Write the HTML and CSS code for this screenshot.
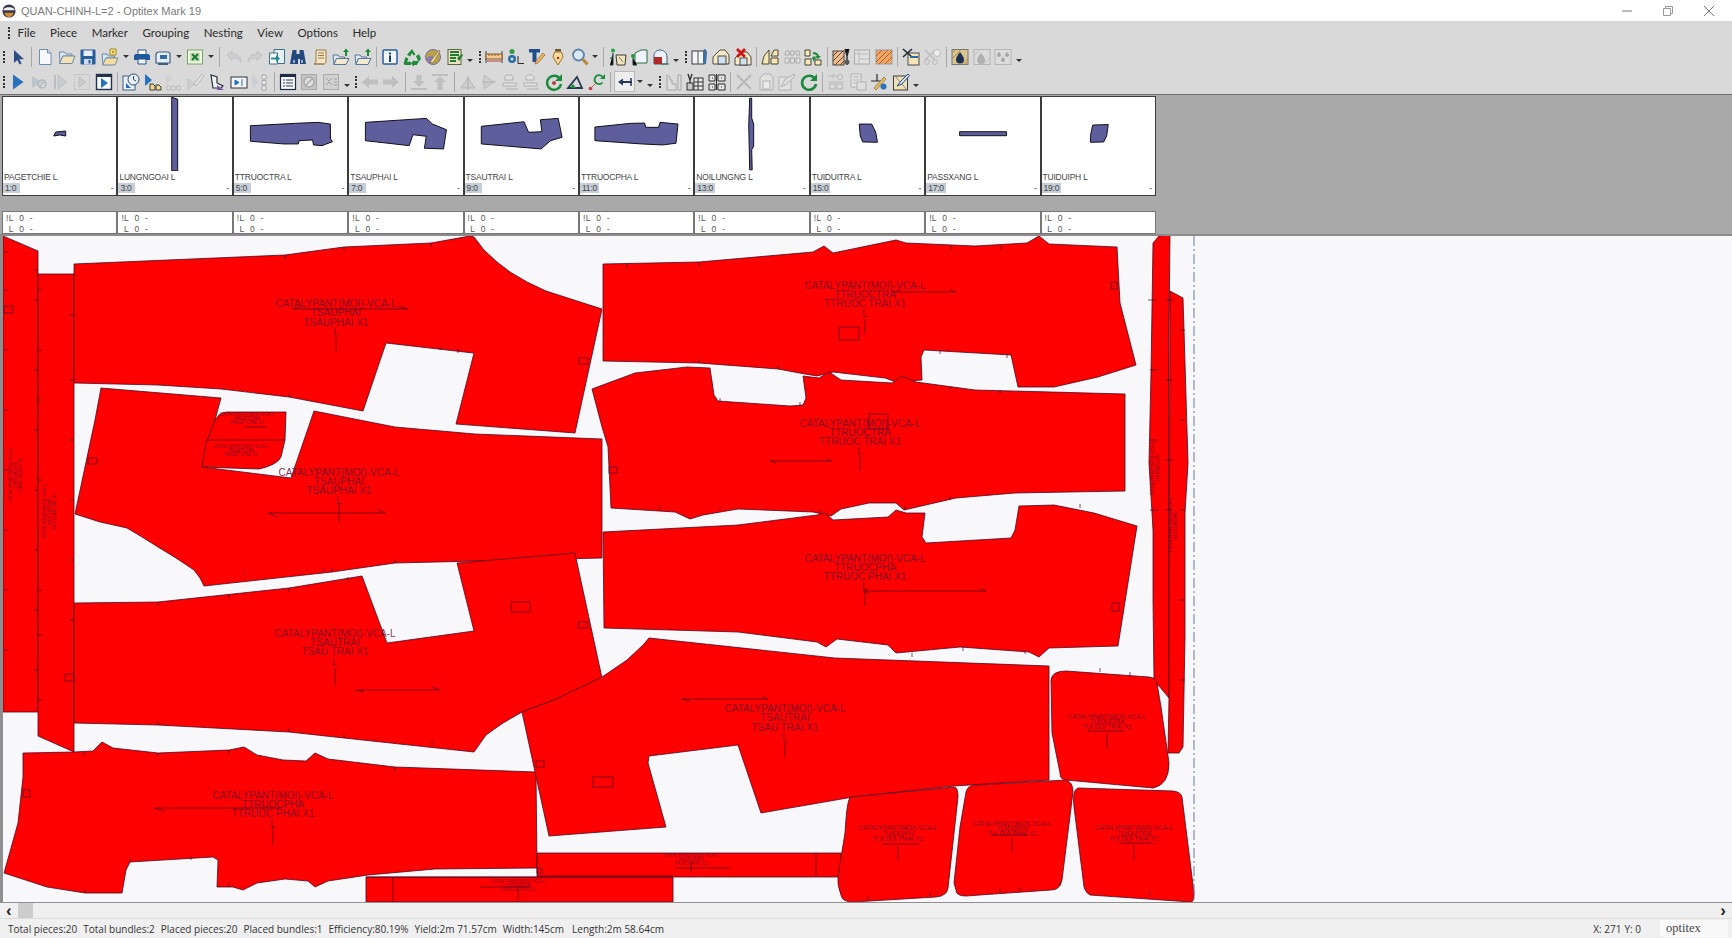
FILE: index.html
```html
<!DOCTYPE html>
<html lang="en">
<head>
<meta charset="utf-8">
<title>QUAN-CHINH-L=2 - Optitex Mark 19</title>
<link rel="stylesheet" href="styles.css">
</head>
<body>
<svg class="defs" aria-hidden="true">
  <symbol id="arrow" viewBox="0 0 18 18"><path d="M5 2v13l3.2-3 2.400 4.600 2-1-2.300-4.400H15z" fill="#2c4f86"/></symbol>
  <symbol id="doc" viewBox="0 0 18 18"><path d="M3.500 1.500h8l3.500 3.500v11.500H3.500z" fill="#f7f9fd" stroke="#6f8db3"/><path d="M11.500 1.500V5H15" fill="#cfdcec" stroke="#6f8db3"/></symbol>
  <symbol id="folder" viewBox="0 0 18 18"><path d="M1.500 4h5l1.500 2h6v2H5L2 15.500z" fill="#dfe9f3" stroke="#6a8aa8"/><path d="M1.500 15.500L5 8h12l-3 7.500z" fill="#f4e4b6" stroke="#6a8aa8"/></symbol>
  <symbol id="save" viewBox="0 0 18 18"><rect x="1.500" y="1.500" width="15" height="15" rx="1" fill="#2a5d9c"/><rect x="4.500" y="2.500" width="9" height="5.500" fill="#e8eef6"/><rect x="5" y="11" width="8" height="5.500" fill="#cfdcec"/><rect x="9.500" y="12" width="2" height="3.500" fill="#2a5d9c"/></symbol>
  <symbol id="ostar" viewBox="0 0 18 18"><path d="M1 6h5l1.500 2h6v2H5L2 17z" fill="#d7e3ee" stroke="#6a8aa8"/><path d="M1.500 17L5 10h12l-3 7z" fill="#f3dc9c" stroke="#6a8aa8"/><path d="M9 1h6v6H9z" fill="#f7e27a" stroke="#a98a2c"/><path d="M11 3h2v2h-2z" fill="#b8902a"/></symbol>
  <symbol id="print" viewBox="0 0 18 18"><path d="M5 2h8v5H5z" fill="#fff" stroke="#2a5288"/><path d="M1 8c0-1 1-2 2-2h12c1 0 2 1 2 2v4H1z" fill="#1f5a9e"/><path d="M5 11h8v5H5z" fill="#eef3f9" stroke="#2a5288"/></symbol>
  <symbol id="scan" viewBox="0 0 18 18"><path d="M2 7c0-2 1-3 3-3h9c1 0 2 1 2 3v8H2z" fill="#e6edf4" stroke="#3d5f82" stroke-width="1.200"/><rect x="6" y="7" width="7" height="4" fill="#2a6ba8"/><path d="M4 15h10v2H4z" fill="#3d5f82"/></symbol>
  <symbol id="xl" viewBox="0 0 18 18"><rect x="1.500" y="2" width="15" height="14" fill="#eef6e8" stroke="#77a25f"/><rect x="4" y="4.500" width="10" height="9" fill="#c5e0b2"/><path d="M6 6l6 6M12 6l-6 6" stroke="#1e7a34" stroke-width="2.200"/></symbol>
  <symbol id="undo" viewBox="0 0 18 18"><path d="M2 7l5-4v3c5 0 9 2 9 8-2-3-5-4-9-4v2.500z" fill="#ccced2" stroke="#b5b7bb" stroke-width=".6"/></symbol>
  <symbol id="redo" viewBox="0 0 18 18"><path d="M16 7l-5-4v3C6 6 2 8 2 14c2-3 5-4 9-4v2.500z" fill="#ccced2" stroke="#b5b7bb" stroke-width=".6"/></symbol>
  <symbol id="export" viewBox="0 0 18 18"><path d="M6 1.500h10.500v14H6z" fill="#e7f0f3" stroke="#3d6f8a"/><path d="M1.500 5h8v11h-8z" fill="#fff" stroke="#3d6f8a"/><path d="M3 9.500h5V7l4 3.500-4 3.500v-2.500H3z" fill="#1f8c8c"/></symbol>
  <symbol id="binoc" viewBox="0 0 18 18"><path d="M3.500 2h4v4h3V2h4l2.500 14h-6v-5h-2v5H1z" fill="#23497c"/><path d="M4 12h2v3H4zM12 12h2v3h-2z" fill="#8fb1d6"/></symbol>
  <symbol id="doclist" viewBox="0 0 18 18"><path d="M5 2h10v11c0 2-1 3-2 3H3c1 0 2-1 2-3z" fill="#f3e5c7" stroke="#9a7a48"/><path d="M7 5h6M7 7.500h6M7 10h6M3 16h10" stroke="#9a7a48"/></symbol>
  <symbol id="farrow" viewBox="0 0 18 18"><path d="M1 7h5l1.500 2h5v1.500H4.500L2 16.500z" fill="#dfe9f3" stroke="#55789a"/><path d="M2 16.500L4.500 10.500H17l-3 6z" fill="#f4e9cc" stroke="#55789a"/><path d="M13 8V4h-2l3-3.500L17 4h-2v4z" fill="#1c8c3a"/></symbol>
  <symbol id="info" viewBox="0 0 18 18"><rect x="2" y="2" width="14" height="14" rx="1" fill="#f2f6fb" stroke="#2a5d9c" stroke-width="1.500"/><path d="M8 7.500h2V14H8zM8 4.500h2v2H8z" fill="#1d3f6e"/></symbol>
  <symbol id="recyc" viewBox="0 0 18 18"><path d="M9 1l3.500 5.500-2 1L9 5 7 8.500 4 6.700zM2.500 9l3 1.700-1.500 3H8V17H3c-2 0-2.800-1.500-2-3zM11 13h5l-1.500 3c-.5 1-1 1-2 1H11v2l-3-3.700 3-3.300z" fill="#1e8c3a"/><path d="M13 8l3-1.700 1.500 3c.5 1 .3 2-.5 3.200l-2 .5z" fill="#1e8c3a"/></symbol>
  <symbol id="comp" viewBox="0 0 18 18"><circle cx="9" cy="9" r="7.500" fill="#b9a24a" stroke="#7a6a9a"/><circle cx="6.500" cy="11.500" r="3.500" fill="#8a7ab5"/><path d="M6 14L15 2l1 1-7 12z" fill="#e8dca0" stroke="#6c5c2a" stroke-width=".6"/></symbol>
  <symbol id="notes" viewBox="0 0 18 18"><rect x="2" y="1.500" width="13" height="15" fill="#e8e2c2" stroke="#5a6a3a"/><path d="M4 4h9M4 7h9M4 10h6M4 13h6" stroke="#247a32" stroke-width="2"/><path d="M11 10l5-4 1 1-4 6z" fill="#247a32"/></symbol>
  <symbol id="ruler" viewBox="0 0 18 18"><path d="M1 3v12M17 3v12" stroke="#3d3d3d"/><rect x="1" y="6" width="16" height="5" fill="#f0c890" stroke="#8a5a28"/><path d="M4 6v2M7 6v2M10 6v2M13 6v2" stroke="#8a5a28"/><path d="M2 13h14" stroke="#c23a3a"/></symbol>
  <symbol id="pieces" viewBox="0 0 18 18"><circle cx="6" cy="3.500" r="2.500" fill="#2f9a3f"/><circle cx="6" cy="11" r="4" fill="#2a6ba8"/><circle cx="6" cy="11" r="1.500" fill="#d4e2f0"/><path d="M12 15.500h6M12 15.500V8" stroke="#2b2b2b"/></symbol>
  <symbol id="tpen" viewBox="0 0 18 18"><path d="M1 1h11v3.500H8.500V14H4.500V4.500H1z" fill="#1f4e8c"/><path d="M8 13l7-8 2 2-7 8-3 1z" fill="#e6b95a" stroke="#a5462a" stroke-width=".6"/></symbol>
  <symbol id="nib" viewBox="0 0 18 18"><path d="M6 1h6v2.500H6z" fill="#6d5a2a"/><path d="M5.500 4h7L14 9l-5 8-5-8z" fill="#f5dca0" stroke="#a27020"/><circle cx="9" cy="10" r="1.300" fill="#b2342a"/></symbol>
  <symbol id="mag" viewBox="0 0 18 18"><circle cx="7.500" cy="7" r="5.500" fill="#dbe8f4" stroke="#5b84ad" stroke-width="1.800"/><path d="M11.500 11l5 5.500" stroke="#b8883a" stroke-width="3"/></symbol>
  <symbol id="pdoc" viewBox="0 0 18 18"><circle cx="4" cy="2.500" r="2" fill="#22a63a"/><path d="M4 5v12h-3M1 10h3" stroke="#24433a"/><path d="M7 7h10l-1 10H8z" fill="#f2e4ba" stroke="#3a3a3a"/><path d="M10 9l4 5" stroke="#777"/></symbol>
  <symbol id="pcorner" viewBox="0 0 18 18"><path d="M5 5l6-3h6v13H5z" fill="#eef4fa" stroke="#2e6a4a"/><circle cx="3" cy="8" r="2" fill="#229a3a"/><path d="M3 10v7H7" stroke="#1c3a2a"/></symbol>
  <symbol id="psplit" viewBox="0 0 18 18"><path d="M2 16V8c0-4 3-6 6-6s7 2 7 7v7z" fill="#eaf0f7" stroke="#3f5f80"/><rect x="2" y="9" width="8" height="7" fill="#b12a2a"/><path d="M9 16h8" stroke="#2d6e3a"/></symbol>
  <symbol id="pbook" viewBox="0 0 18 18"><rect x="1" y="3" width="12" height="13" fill="#f3f5f8" stroke="#3a3a3a"/><path d="M7 3v13" stroke="#555"/><path d="M13 1c2 0 3 2 3 4l-1 11h-3V5z" fill="#3f6fa0"/></symbol>
  <symbol id="house" viewBox="0 0 18 18"><path d="M1 16V9l7-7h5l4 5v9z" fill="#f6eac4" stroke="#4a4a4a"/><rect x="6" y="8" width="8" height="8" fill="#cfe0ee" stroke="#4a4a4a"/></symbol>
  <symbol id="housex" viewBox="0 0 18 18"><path d="M1 17V10l6-6h6l4 5v8z" fill="#f6eac4" stroke="#4a4a4a"/><rect x="6" y="10" width="7" height="7" fill="#cfe0ee" stroke="#4a4a4a"/><path d="M3 1l8 8M11 1L3 9" stroke="#d21414" stroke-width="2.800"/></symbol>
  <symbol id="two" viewBox="0 0 18 18"><path d="M1 16l2-8 5-6v14zM10 8l3-6h4v6zM10 10h7v6h-7z" fill="#f6e6b4" stroke="#4e4a30"/></symbol>
  <symbol id="dots" viewBox="0 0 18 18"><path d="M3 3h3v4H2zM8 3h3v4H7.500zM13 3h3l1 4h-4zM2 10h4v5H2zM7.500 10h4v5h-4zM13 10h4v5h-4z" fill="#e0e0e0" stroke="#aaa"/></symbol>
  <symbol id="dotsg" viewBox="0 0 18 18"><path d="M1 2h5v6H1zM1 11h6v6H1zM11 12h6v5h-6z" fill="#f6e8b8" stroke="#47472f"/><path d="M9 4c3 0 5 1 6 4h2l-3 3-3-3h2c-1-1-2-2-4-2zM9 14v-3h-2l3-3 3 3h-2z" fill="#218a3a"/></symbol>
  <symbol id="hatch" viewBox="0 0 18 18"><rect x="1" y="3" width="11" height="14" fill="#e8c090" stroke="#444"/><path d="M1 8l5-5M1 13l10-10M3 17l9-9M8 17l4-4" stroke="#7a3a2a"/><path d="M13 1l2 7 2-7M15 8v9" stroke="#2a2a2a" stroke-width="1.400"/><circle cx="15" cy="14" r="2.500" fill="#5a5a5a"/></symbol>
  <symbol id="grect" viewBox="0 0 18 18"><rect x="1.500" y="2" width="15" height="14" fill="#e0e0e0" stroke="#aaa"/><path d="M1.500 6h15M6 2v14M6 11h10" stroke="#bbb"/></symbol>
  <symbol id="hatchb" viewBox="0 0 18 18"><rect x="1" y="2" width="16" height="14" fill="#eda868" stroke="#999"/><path d="M1 8l6-6M1 14L13 2M4 16L17 3M10 16l7-7" stroke="#c6551f"/></symbol>
  <symbol id="sci" viewBox="0 0 18 18"><rect x="6" y="5" width="11" height="12" fill="#f4e4b6" stroke="#4a4a4a"/><path d="M1 1l9 8M1 9l9-8" stroke="#1d2c3a" stroke-width="1.600"/><path d="M8 9h8" stroke="#2a6ba8" stroke-width="2"/></symbol>
  <symbol id="scig" viewBox="0 0 18 18"><path d="M1 2l10 10M11 2L1 12" stroke="#bbb" stroke-width="1.400"/><circle cx="3" cy="14" r="2.500" fill="none" stroke="#bbb"/><circle cx="11" cy="14" r="2.500" fill="none" stroke="#bbb"/><circle cx="13" cy="5" r="3.500" fill="#ececec" stroke="#bbb"/></symbol>
  <symbol id="drop" viewBox="0 0 18 18"><rect x="1" y="1.500" width="16" height="15" fill="#d9c58f" stroke="#777"/><path d="M1 5l4-3.500M1 11l9-9.500M11 16.500l6-6M14 16.500l3-3" stroke="#b48a48"/><path d="M9 4c2 3 4 5 4 7.500a4 4 0 0 1-8 0C5 9 7 7 9 4z" fill="#1b2f52"/></symbol>
  <symbol id="dropg" viewBox="0 0 18 18"><rect x="1" y="1.500" width="16" height="15" fill="#dcdcdc" stroke="#b5b5b5"/><path d="M1 8l6.500-6.500M10 16.500L17 9" stroke="#c4c4c4"/><path d="M8 5c2 2 4 5 4 7a4 4 0 0 1-8 0c0-2 2-5 4-7z" fill="#b0b0b0"/></symbol>
  <symbol id="dropt" viewBox="0 0 18 18"><rect x="1" y="1.500" width="16" height="15" fill="#dcdcdc" stroke="#b5b5b5"/><path d="M5 4c1 1 2 2 2 3a2 2 0 0 1-4 0c0-1 1-2 2-3zM13 4c1 1 2 2 2 3a2 2 0 0 1-4 0c0-1 1-2 2-3zM9 9c1 1 2 2 2 3a2 2 0 0 1-4 0c0-1 1-2 2-3z" fill="#a8a8a8"/></symbol>

  <symbol id="play" viewBox="0 0 18 18"><path d="M4 1.500L14.500 9 4 16.500z" fill="#2a71bb"/></symbol>
  <symbol id="nop" viewBox="0 0 18 18"><path d="M2 3l10 6-10 6z" fill="#bcc4ce"/><circle cx="12" cy="11" r="4" fill="none" stroke="#b0b7c0" stroke-width="1.500"/><path d="M9 14l6-6" stroke="#b0b7c0" stroke-width="1.500"/></symbol>
  <symbol id="gplay" viewBox="0 0 18 18"><path d="M3 2v14" stroke="#bcbcbc" stroke-width="2"/><path d="M6 2l9 7-9 7z" fill="#c8ccd0" stroke="#b5b5b5" stroke-width=".6"/></symbol>
  <symbol id="dplay" viewBox="0 0 18 18"><rect x="1.500" y="1.500" width="15" height="15" fill="none" stroke="#bdbdbd" stroke-dasharray="2 1"/><path d="M6 4l7 5-7 5z" fill="#c8ccd0" stroke="#b5b5b5" stroke-width=".6"/></symbol>
  <symbol id="bplay" viewBox="0 0 18 18"><rect x="1.500" y="1.500" width="15" height="15" fill="#f5f8fc" stroke="#23324a" stroke-width="1.400"/><path d="M1.500 3h15" stroke="#23324a" stroke-width="2"/><path d="M6 5l7 5-7 5z" fill="#2a71bb"/></symbol>
  <symbol id="clock" viewBox="0 0 18 18"><rect x="1" y="3" width="12" height="14" fill="#eaf0f6" stroke="#3f5f80"/><circle cx="11.500" cy="6.500" r="5.500" fill="#e9eef5" stroke="#2a4a70"/><path d="M11.500 3v3.500L14 8" stroke="#2a4a70" fill="none"/><path d="M4 10l5 5H4z" fill="#2a71bb"/></symbol>
  <symbol id="plp" viewBox="0 0 18 18"><path d="M1 1l7 6-7 6z" fill="#2a71bb"/><path d="M6 17v-6h3l2 2v4zM12 17v-5h3l2 2v3z" fill="#f2d98c" stroke="#3a3a3a"/></symbol>
  <symbol id="gpl" viewBox="0 0 18 18"><path d="M1 1l6 5-6 5z" fill="#cfcfcf"/><path d="M2 17v-4h3v4zM7 17v-4h3v4zM12 17v-4h3v4z" fill="#e8e8e8" stroke="#b5b5b5"/></symbol>
  <symbol id="gpen" viewBox="0 0 18 18"><path d="M1 6l6 5-6 6z" fill="#cfcfcf" stroke="#b5b5b5" stroke-width=".6"/><path d="M7 11l8-10 2 2-8 10z" fill="#e4e4e4" stroke="#b5b5b5"/></symbol>
  <symbol id="curs" viewBox="0 0 18 18"><path d="M3 2l6 2v6l6 3-2 2H5z" fill="#f4f5f7" stroke="#242f40" stroke-width="1.200"/><path d="M9 12l7 5H9z" fill="#7a5ba8"/></symbol>
  <symbol id="brect" viewBox="0 0 18 18"><rect x="1" y="4" width="16" height="11" fill="#f2f5f9" stroke="#333"/><path d="M5 7l4 2.500L5 12zM12 6v7" fill="#2a71bb" stroke="#2a71bb"/></symbol>
  <symbol id="pdot" viewBox="0 0 18 18"><path d="M1 1l7 8-7 8z" fill="#cbd0d5"/><path d="M11 2h4v4h-4zM11 7.500h4v4h-4zM11 13h4v4h-4z" fill="#eee" stroke="#a5a5a5"/></symbol>
  <symbol id="list" viewBox="0 0 18 18"><rect x="1.500" y="1.500" width="15" height="15" fill="#f6f8fb" stroke="#1f2d45" stroke-width="1.200"/><path d="M1.500 3h15" stroke="#1f2d45" stroke-width="2"/><path d="M4 7h2M7 7h7M4 10h2M7 10h7M4 13h2M7 13h7" stroke="#2f3f58"/></symbol>
  <symbol id="gcirc" viewBox="0 0 18 18"><rect x="1.500" y="1.500" width="15" height="15" fill="#c4c4c4" stroke="#a8a8a8"/><circle cx="9" cy="9" r="5" fill="#dfdfdf" stroke="#a8a8a8" stroke-width="1.400"/><path d="M5.500 12.500l7-7" stroke="#a8a8a8" stroke-width="1.400"/></symbol>
  <symbol id="glist" viewBox="0 0 18 18"><rect x="1.500" y="1.500" width="15" height="15" fill="#d0d0d0" stroke="#aaa"/><path d="M4 5l3 3 3-3M4 12l3-3 3 3M12 6h3M12 9h3M12 12h3" stroke="#a0a0a0" fill="none"/></symbol>
  <symbol id="gl" viewBox="0 0 18 18"><path d="M1 9l7-6v3.500h9v5H8V15z" fill="#bfbfbf"/></symbol>
  <symbol id="gr" viewBox="0 0 18 18"><path d="M17 9l-7-6v3.500H1v5h9V15z" fill="#bfbfbf"/></symbol>
  <symbol id="gd" viewBox="0 0 18 18"><path d="M9 14l-6-6h3.500V2h5v6H15z" fill="#bfbfbf"/><path d="M1 16h16" stroke="#b5b5b5" stroke-width="1.500"/></symbol>
  <symbol id="gu" viewBox="0 0 18 18"><path d="M9 3l6 6h-3.500v8h-5V9H3z" fill="#bfbfbf"/><path d="M1 2h16" stroke="#b5b5b5" stroke-width="1.500"/></symbol>
  <symbol id="gt" viewBox="0 0 18 18"><path d="M9 5l7 10H2z" fill="#cdcdcd" stroke="#b8b8b8"/><path d="M9 3v14" stroke="#b0b0b0"/></symbol>
  <symbol id="gt2" viewBox="0 0 18 18"><path d="M4 2l10 7-10 7z" fill="#cdcdcd" stroke="#b8b8b8"/><path d="M2 9h14" stroke="#b0b0b0"/></symbol>
  <symbol id="gp" viewBox="0 0 18 18"><path d="M3 7V4c0-1 1-2 3-2h3l2 2v3zM1 13v-3h13v3zM4 16h12" fill="#e2e2e2" stroke="#b0b0b0"/></symbol>
  <symbol id="rot" viewBox="0 0 18 18"><path d="M15 6A7 7 0 1 0 16 11" fill="none" stroke="#1c8a3e" stroke-width="2.400"/><path d="M17 1v7h-7z" fill="#1c8a3e"/><circle cx="9" cy="10" r="2" fill="#b8403a"/></symbol>
  <symbol id="tri" viewBox="0 0 18 18"><path d="M2 15L11 4l5 11z" fill="none" stroke="#25384e" stroke-width="1.800"/><path d="M5 15a4 4 0 0 1 2-4l3 4z" fill="#1c8a3e"/></symbol>
  <symbol id="arc" viewBox="0 0 18 18"><circle cx="2.500" cy="15.500" r="1.800" fill="#c43a3a"/><path d="M4 14c2-2 3-3 5-5" stroke="#c43a3a" stroke-dasharray="2 1" fill="none"/><path d="M15.500 6a4.500 4.500 0 1 0-1 3.500" fill="none" stroke="#1c8a3e" stroke-width="1.800"/><path d="M17 1v5h-5z" fill="#1c8a3e"/></symbol>
  <symbol id="sel" viewBox="0 0 18 18"><path d="M2 9l5-3.500V8h9v2H7v2.500z" fill="#223a5e"/><path d="M15 5v8" stroke="#223a5e" stroke-width="1.500"/></symbol>
  <symbol id="gtool" viewBox="0 0 18 18"><path d="M2 17V2l3 2v3h2v4h4v6zM13 2h3v15h-3z" fill="#dedede" stroke="#a5a5a5"/></symbol>
  <symbol id="tool2" viewBox="0 0 18 18"><path d="M2 1l2 6 2-6M4 7v3" stroke="#2a2a2a" stroke-width="1.300" fill="none"/><rect x="1" y="10" width="6" height="7" fill="#c8c8c8" stroke="#333"/><rect x="8" y="5" width="9" height="12" fill="#e8e8e8" stroke="#333"/><path d="M8 9h9M8 13h9M12 5v12" stroke="#333"/></symbol>
  <symbol id="tool3" viewBox="0 0 18 18"><path d="M1 2h6v6H1zM10 2h7v6h-7zM1 11h6v6H1zM10 11h7v6h-7z" fill="#e8e8e8" stroke="#2d2d2d"/><path d="M8.500 1v16M4 5h1M13 5h1M4 14h1M13 14h1" stroke="#2d2d2d"/></symbol>
  <symbol id="gx" viewBox="0 0 18 18"><path d="M2 2l14 14M16 2L2 16" stroke="#b8b8b8" stroke-width="2"/></symbol>
  <symbol id="gdoc" viewBox="0 0 18 18"><path d="M3 17V5l4-4h6l3 4v12z" fill="#e2e2e2" stroke="#b0b0b0"/><rect x="6" y="8" width="7" height="8" fill="#ececec" stroke="#b0b0b0"/></symbol>
  <symbol id="gchk" viewBox="0 0 18 18"><rect x="1" y="4" width="12" height="13" fill="#e2e2e2" stroke="#b2b2b2"/><path d="M3 14l4-8 9-5 1 2-8 8z" fill="#dbdbdb" stroke="#b2b2b2"/></symbol>
  <symbol id="cgreen" viewBox="0 0 18 18"><path d="M15 6A7 7 0 1 0 16 11" fill="none" stroke="#1c8a3e" stroke-width="2.600"/><path d="M17 1v7h-7z" fill="#1c8a3e"/></symbol>
  <symbol id="gset" viewBox="0 0 18 18"><path d="M1 3h10M1 9h16M1 15h16M6 1v4" stroke="#bababa"/><circle cx="13" cy="4" r="2.500" fill="#dedede" stroke="#b5b5b5"/><rect x="3" y="11" width="5" height="5" fill="#dedede" stroke="#b5b5b5"/><rect x="10" y="11" width="5" height="5" fill="#dedede" stroke="#b5b5b5"/></symbol>
  <symbol id="gset2" viewBox="0 0 18 18"><path d="M2 1h10v13H2z" fill="#e2e2e2" stroke="#b0b0b0"/><path d="M4 4h6M4 7h6M4 10h6" stroke="#b5b5b5"/><path d="M8 9h9v8H8z" fill="#dedede" stroke="#b0b0b0"/></symbol>
  <symbol id="penb" viewBox="0 0 18 18"><path d="M1 8h12M7 1v7" stroke="#2a2a2a" stroke-width="1.200"/><path d="M4 15L14 4l2 2L6 17z" fill="#e8b95a" stroke="#7a5a2a" stroke-width=".6"/><circle cx="13.500" cy="13.500" r="3" fill="#2a71bb"/></symbol>
  <symbol id="chkb" viewBox="0 0 18 18"><rect x="1.500" y="3" width="14" height="14" fill="#f0e2b8" stroke="#3a3a3a"/><path d="M3 3l12 14" stroke="#888"/><path d="M5 13l4-5 7-7 1.500 1.500L10 11z" fill="#d8e8f4" stroke="#264a70"/></symbol>
</svg>

<div class="app">
  <header class="title">
    <svg class="logo" viewBox="0 0 16 16"><circle cx="8" cy="8" r="7.500" fill="#3a3550"/><path d="M2 6c2-3 10-3 12 0v1H2z" fill="#f2f2f2"/><path d="M2.500 10h11c-1 3-3 5-5.500 5s-4.500-2-5.500-5z" fill="#d08a2a"/></svg>
    <span class="title-text">QUAN-CHINH-L=2 - Optitex Mark 19</span>
    <span class="win">
      <svg viewBox="0 0 12 12"><path d="M1 6h10" stroke="#777"/></svg>
      <svg viewBox="0 0 12 12"><path d="M1.500 3.500h7v7h-7zM3.500 3.500v-2h7v7h-2" fill="none" stroke="#999"/></svg>
      <svg viewBox="0 0 12 12"><path d="M1 1l10 10M11 1L1 11" stroke="#777"/></svg>
    </span>
  </header>

  <nav class="menu">
    <span class="g"></span>
    <span>File</span><span>Piece</span><span>Marker</span><span>Grouping</span><span>Nesting</span><span>View</span><span>Options</span><span>Help</span>
  </nav>

  <div class="tb">
    <span class="g"></span>
    <svg class="i"><use href="#arrow"/></svg><span class="s"></span>
    <svg class="i"><use href="#doc"/></svg><svg class="i"><use href="#folder"/></svg><svg class="i"><use href="#save"/></svg><svg class="i"><use href="#ostar"/></svg><span class="d"></span>
    <svg class="i"><use href="#print"/></svg><svg class="i"><use href="#scan"/></svg><span class="d"></span>
    <svg class="i"><use href="#xl"/></svg><span class="d"></span><span class="s"></span>
    <svg class="i"><use href="#undo"/></svg><svg class="i"><use href="#redo"/></svg><svg class="i"><use href="#export"/></svg><svg class="i"><use href="#binoc"/></svg><svg class="i"><use href="#doclist"/></svg><svg class="i"><use href="#farrow"/></svg><svg class="i"><use href="#farrow"/></svg><span class="s"></span>
    <svg class="i"><use href="#info"/></svg><svg class="i"><use href="#recyc"/></svg><svg class="i"><use href="#comp"/></svg><svg class="i"><use href="#notes"/></svg><span class="d low"></span>
    <span class="g"></span>
    <svg class="i"><use href="#ruler"/></svg><svg class="i"><use href="#pieces"/></svg><svg class="i"><use href="#tpen"/></svg><svg class="i"><use href="#nib"/></svg><svg class="i"><use href="#mag"/></svg><span class="d"></span><span class="s"></span>
    <svg class="i"><use href="#pdoc"/></svg><svg class="i"><use href="#pcorner"/></svg><svg class="i"><use href="#psplit"/></svg><span class="d low"></span>
    <span class="g"></span>
    <svg class="i"><use href="#pbook"/></svg><svg class="i"><use href="#house"/></svg><svg class="i"><use href="#housex"/></svg><span class="s"></span>
    <svg class="i"><use href="#two"/></svg><svg class="i"><use href="#dots"/></svg><svg class="i"><use href="#dotsg"/></svg><span class="s"></span>
    <svg class="i"><use href="#hatch"/></svg><svg class="i"><use href="#grect"/></svg><svg class="i"><use href="#hatchb"/></svg><span class="s"></span>
    <svg class="i"><use href="#sci"/></svg><svg class="i"><use href="#scig"/></svg><span class="s"></span>
    <svg class="i"><use href="#drop"/></svg><svg class="i"><use href="#dropg"/></svg><svg class="i"><use href="#dropt"/></svg><span class="d low"></span>
  </div>

  <div class="tb">
    <span class="g"></span>
    <svg class="i"><use href="#play"/></svg><svg class="i"><use href="#nop"/></svg><svg class="i"><use href="#gplay"/></svg><svg class="i"><use href="#dplay"/></svg><svg class="i"><use href="#bplay"/></svg><span class="s"></span>
    <svg class="i"><use href="#clock"/></svg><svg class="i"><use href="#plp"/></svg><svg class="i"><use href="#gpl"/></svg><svg class="i"><use href="#gpen"/></svg><svg class="i"><use href="#curs"/></svg><svg class="i"><use href="#brect"/></svg><svg class="i"><use href="#pdot"/></svg><span class="s"></span>
    <svg class="i"><use href="#list"/></svg><svg class="i"><use href="#gcirc"/></svg><svg class="i"><use href="#glist"/></svg><span class="d low"></span>
    <span class="g"></span>
    <svg class="i"><use href="#gl"/></svg><svg class="i"><use href="#gr"/></svg><span class="s"></span>
    <svg class="i"><use href="#gd"/></svg><svg class="i"><use href="#gu"/></svg><span class="s"></span>
    <svg class="i"><use href="#gt"/></svg><svg class="i"><use href="#gt2"/></svg><svg class="i"><use href="#gp"/></svg><svg class="i"><use href="#gp"/></svg><svg class="i"><use href="#rot"/></svg><svg class="i"><use href="#tri"/></svg><svg class="i"><use href="#arc"/></svg><span class="s"></span>
    <span class="selected"><svg class="i"><use href="#sel"/></svg></span><span class="d"></span><span class="d low"></span>
    <span class="g"></span>
    <svg class="i"><use href="#gtool"/></svg><svg class="i"><use href="#tool2"/></svg><svg class="i"><use href="#tool3"/></svg><span class="s"></span>
    <svg class="i"><use href="#gx"/></svg><svg class="i"><use href="#gdoc"/></svg><svg class="i"><use href="#gchk"/></svg><svg class="i"><use href="#cgreen"/></svg><span class="s"></span>
    <svg class="i"><use href="#gset"/></svg><svg class="i"><use href="#gset2"/></svg><svg class="i"><use href="#penb"/></svg><svg class="i"><use href="#chkb"/></svg><span class="d low"></span>
  </div>

  <section class="strip">
    <div class="cards">
      <div class="thumb"><svg viewBox="1 1 114 74"><polygon class="pc" points="52,40 54,36 64,35 64,40 58,39"/></svg><div class="nm">PAGETCHIE L</div><div class="ft"><span class="tag">1:0</span><span>-</span></div></div>
      <div class="thumb"><svg viewBox="1 1 114 74"><polygon class="pc" points="55,1 61,3 61,75 55,75"/></svg><div class="nm">LUNGNGOAI L</div><div class="ft"><span class="tag">3:0</span><span>-</span></div></div>
      <div class="thumb"><svg viewBox="1 1 114 74"><polygon class="pc" points="17.500,29.700 62.700,27.300 85.600,26.300 97.900,28 98,43 100,45.700 89.500,49.700 81,49 80,44 66.500,44.700 65.700,48 51,48 17.500,45.300"/></svg><div class="nm">TTRUOCTRA L</div><div class="ft"><span class="tag">5:0</span><span>-</span></div></div>
      <div class="thumb"><svg viewBox="1 1 114 74"><polygon class="pc" points="17.500,26.300 78.700,22.300 85,28 99,33.700 96,53 76.800,52.300 78.700,40.300 65.300,38.700 61.500,49.700 17.500,44.700"/></svg><div class="nm">TSAUPHAI L</div><div class="ft"><span class="tag">7:0</span><span>-</span></div></div>
      <div class="thumb"><svg viewBox="1 1 114 74"><polygon class="pc" points="17.400,30.300 60.300,25.700 64.900,36.300 78.300,35.700 76.800,23.700 94.700,22.300 98.600,41.300 87,44.700 77.500,53 17.400,48"/></svg><div class="nm">TSAUTRAI L</div><div class="ft"><span class="tag">9:0</span><span>-</span></div></div>
      <div class="thumb"><svg viewBox="1 1 114 74"><polygon class="pc" points="16,31 51.600,27.300 66,27 67,31.300 80,31.300 81.500,26.300 99.500,28 97.500,47.300 84,49 63,48 16,44.700"/></svg><div class="nm">TTRUOCPHA L</div><div class="ft"><span class="tag">11:0</span><span>-</span></div></div>
      <div class="thumb"><svg viewBox="1 1 114 74"><polygon class="pc" points="56,2 58,2 58,22 60,28 60,50 58,54 58.500,74 56,74 55.500,50 55,30"/></svg><div class="nm">NOILUNGNG L</div><div class="ft"><span class="tag">13:0</span><span>-</span></div></div>
      <div class="thumb"><svg viewBox="1 1 114 74"><polygon class="pc" points="49.500,28 62,28 66,36 67.800,46.300 53,46 50.500,40"/></svg><div class="nm">TUIDUITRA L</div><div class="ft"><span class="tag">15:0</span><span>-</span></div></div>
      <div class="thumb"><svg viewBox="1 1 114 74"><polygon class="pc" points="34.800,35.700 82,35.700 82,39.700 34.800,39.700"/></svg><div class="nm">PASSXANG L</div><div class="ft"><span class="tag">17:0</span><span>-</span></div></div>
      <div class="thumb"><svg viewBox="1 1 114 74"><polygon class="pc" points="52,29 67.600,28.500 66,40 63,46 49.600,46.300 50,38"/></svg><div class="nm">TUIDUIPH L</div><div class="ft"><span class="tag">19:0</span><span>-</span></div></div>
    </div>
    <div class="cards boxes">
      <div class="qty">!L&nbsp;&nbsp;0&nbsp;&nbsp;-<br>&nbsp;L&nbsp;&nbsp;0&nbsp;&nbsp;-</div>
      <div class="qty">!L&nbsp;&nbsp;0&nbsp;&nbsp;-<br>&nbsp;L&nbsp;&nbsp;0&nbsp;&nbsp;-</div>
      <div class="qty">!L&nbsp;&nbsp;0&nbsp;&nbsp;-<br>&nbsp;L&nbsp;&nbsp;0&nbsp;&nbsp;-</div>
      <div class="qty">!L&nbsp;&nbsp;0&nbsp;&nbsp;-<br>&nbsp;L&nbsp;&nbsp;0&nbsp;&nbsp;-</div>
      <div class="qty">!L&nbsp;&nbsp;0&nbsp;&nbsp;-<br>&nbsp;L&nbsp;&nbsp;0&nbsp;&nbsp;-</div>
      <div class="qty">!L&nbsp;&nbsp;0&nbsp;&nbsp;-<br>&nbsp;L&nbsp;&nbsp;0&nbsp;&nbsp;-</div>
      <div class="qty">!L&nbsp;&nbsp;0&nbsp;&nbsp;-<br>&nbsp;L&nbsp;&nbsp;0&nbsp;&nbsp;-</div>
      <div class="qty">!L&nbsp;&nbsp;0&nbsp;&nbsp;-<br>&nbsp;L&nbsp;&nbsp;0&nbsp;&nbsp;-</div>
      <div class="qty">!L&nbsp;&nbsp;0&nbsp;&nbsp;-<br>&nbsp;L&nbsp;&nbsp;0&nbsp;&nbsp;-</div>
      <div class="qty">!L&nbsp;&nbsp;0&nbsp;&nbsp;-<br>&nbsp;L&nbsp;&nbsp;0&nbsp;&nbsp;-</div>
    </div>
  </section>

  <main class="canvas">
    <svg class="marker" viewBox="0 236 1732 666" preserveAspectRatio="xMinYMin slice">
      <g class="red">
        <polygon points="3,236 38,251 38,712 3,712"/>
        <polygon points="38,274 74,274 74,752 38,736"/>
        <polygon points="74,264 285,255 344,247 431,243 470,236 474,237 484,250 497,262 510,272 527,282 546,291 574,300 602,309 575,433 456,424 474,353 473,353 386,343 363,411 289,397 221,389 158,385 74,383"/>
        <polygon points="101,388 221,398 202,467 291,478 314,411 395,427 475,434 602,439 602,558 395,563 332,572 204,586 200,578 194,570 176,558 158,547 142,537 127,528 100,522 75,514 95,420"/>
        <path d="M227 412H286L285 440L281 457Q277 465 259 469L202 467L206 443L214 423Q218 412 227 412Z"/>
        <polygon points="457,563 575,553 576,558 602,678 554,700 522,712 503,723 486,735 474,752 344,738 289,732 158,725 74,723 74,603 158,602 289,588 362,576 387,643 474,631"/>
        <polygon points="23,753 74,752 93,751 102,742 113,748 158,753 229,750 244,747 257,755 283,760 306,761 315,753 328,759 395,767 536,772 537,868 435,869 368,875 328,881 315,887 308,881 285,879 257,883 243,890 233,887 217,887 218,860 213,857 130,862 126,870 122,893 85,893 47,887 4,873 18,823 23,777"/>
        <polygon points="366,877 537,877 673,877 673,902 366,902"/>
        <polygon points="537,853 841,853 841,877 537,877"/>
        <polygon points="649,638 835,658 1049,666 1049,780 954,786 853,797 761,813 738,745 649,756 648,763 666,827 549,836 522,712 554,700 602,677 627,660 643,645"/>
        <polygon points="603,264 699,262 813,252 824,246 833,253 896,240 906,243 975,246 1027,243 1039,236 1049,244 1117,247 1120,303 1136,365 1098,377 1054,387 1018,387 1011,355 924,350 921,357 922,380 896,382 885,378 833,372 817,376 805,374 778,369 699,363 603,361"/>
        <polygon points="592,389 635,373 687,367 710,368 714,395 718,401 790,406 803,405 806,398 803,376 819,378 829,372 841,380 892,383 902,376 916,382 975,390 1125,394 1125,491 1015,493 956,498 904,510 896,503 869,503 841,509 831,516 813,512 738,509 703,515 690,519 675,512 611,508 608,447 602,427"/>
        <polygon points="603,532 738,525 817,515 825,513 833,520 888,517 896,510 906,513 925,513 922,537 926,543 1011,538 1015,530 1019,506 1054,505 1094,513 1137,526 1118,646 1049,648 1039,657 1029,652 960,647 896,653 888,645 837,639 826,647 817,642 738,632 604,628"/>
        <polygon points="1153,243 1159,236 1170,235 1169,330 1169,698 1154,680 1153,600 1153,530 1149,463 1151,373"/>
        <polygon points="1170,291 1183,298 1184,330 1188,463 1185,513 1185,637 1183,747 1179,753 1168,753 1169,697"/>
        <path d="M1051 680Q1052 671 1066 671L1149 677Q1157 678 1157 683L1161 707L1169 763Q1169 785 1153 788L1066 780Q1060 780 1060 773L1052 733Z"/>
        <path d="M851 797L954 787Q958 787 958 797L948 888Q947 896 936 897L853 902Q842 902 841 895Q837 885 838 876L845 833Q847 797 851 797Z"/>
        <path d="M966 792Q968 785 975 785L1066 780Q1073 782 1073 792L1062 880Q1060 890 1051 890L966 896Q956 896 956 890L954 883L960 827Z"/>
        <path d="M1078 788L1173 791Q1181 792 1182 797L1194 893Q1194 902 1191 902L1090 895Q1085 892 1084 887L1074 807Q1072 790 1078 788Z"/>
      </g>
      <line class="dash" x1="1194" y1="236" x2="1194" y2="902"/>
      <g class="ln">
        <path d="M207 440H285"/>
        <path d="M393 877V902M816 853V877M537 876H673M366 877H537"/>
        <path d="M293 309H408M293 309l8-3M408 309l-10-3M268 513H385M268 513l10 4M385 513l-8-4M356 690H440M356 690l8 2M440 690l-8-3M154 808H281M154 808l10 3M894 292H956M894 292l6-2M956 292l-6-2M770 461H832M770 461l6 2M832 461l-6-2M863 591H986M863 591l6 2M986 591l-6-2M682 699H768M682 699l8 2M768 699l-6-3M675 868H730M480 887H530M245 427H266M1088 731H1124M882 844H919M991 835H1027M1119 843H1153"/>
        <path d="M336 336V352M339 503V522M335 668V686M273 825V845M865 319V334M860 456V471M865 592V606M785 742V757M1107 734V748M898 846V860M1012 838V852M1134 845V860M518 888V900M691 862V872"/>
        <path d="M4 252h4M4 290h4M4 350h4M4 410h4M4 470h4M4 530h4M4 590h4M4 650h4M34 270h4M34 300h4M34 370h4M34 430h4M34 490h4M34 550h4M34 610h4M34 670h4M38 290h4M38 350h4M38 400h4M38 480h4M38 590h4M38 635h4M38 700h4M70 315h4M70 380h4M70 440h4M70 500h4M70 560h4M70 620h4"/>
        <path d="M285 255v4M344 247v4M431 243v4M289 397v-4M458 353v-4M440 350v-4M324 572v-4M332 572v-4M395 563v-4M244 575v-4M158 602v4M229 594v4M289 588v4M348 577v4M158 725v-4M289 732v-4M344 738v-4M432 745v-4M84 752v4M158 753v4M229 750v4M395 767v4M85 893v-4M130 862v-4M191 856v4M229 887v-4"/>
        <path d="M627 264v4M699 262v4M778 369v-4M699 363v-4M951 246v4M1001 246v4M940 350v4M1007 354v4M720 402v-4M800 406v-4M950 387v4M1000 390v4M660 509v-4M720 510v-4M820 513v-4M905 510v-4M1080 504v4M950 500v-4M963 647v4M1025 650v4M912 653v4M1100 668v4M1130 672v4M1060 886v-4M1150 895v-4M868 900v-4M930 896v-4M1000 893v-4M1020 891v-4"/>
        <path d="M1148 300h8M1150 370h8M1150 440h8M1150 510h8M1165 300h8M1165 380h8M1165 460h8M1165 510h8M1180 330h5M1180 420h5M1180 510h5M1180 600h5M1180 680h5"/>
      </g>
      <g class="box">
        <rect x="4" y="306" width="9" height="7"/><rect x="579" y="358" width="9" height="6"/><rect x="88" y="458" width="9" height="6"/><rect x="609" y="467" width="8" height="6"/><rect x="839" y="327" width="20" height="13"/><rect x="869" y="414" width="19" height="15"/><rect x="511" y="602" width="19" height="10"/><rect x="593" y="777" width="20" height="10"/><rect x="65" y="674" width="9" height="7"/><rect x="23" y="790" width="7" height="7"/><rect x="578" y="622" width="10" height="6"/><rect x="536" y="761" width="8" height="6"/><rect x="1111" y="282" width="6" height="7"/><rect x="1112" y="603" width="7" height="8"/><rect x="537" y="868" width="5" height="5"/>
      </g>
      <g class="lbl">
        <text x="336" y="307">CATALYPANT(MOI)-VCA-L</text><text x="336" y="316">TSAUPHAI</text><text x="336" y="326">TSAUPHAI X1</text><text x="336" y="335">L</text>
        <text x="339" y="476">CATALYPANT(MOI)-VCA-L</text><text x="339" y="485">TSAUPHAI</text><text x="339" y="494">TSAUPHAI X1</text><text x="339" y="504">L</text>
        <text x="335" y="637">CATALYPANT(MOI)-VCA-L</text><text x="335" y="646">TSAUTRAI</text><text x="335" y="655">TSAU TRAI X1</text><text x="335" y="666">L</text>
        <text x="273" y="799">CATALYPANT(MOI)-VCA-L</text><text x="273" y="808">TTRUOCPHA</text><text x="273" y="817">TTRUOC PHAI X1</text><text x="273" y="827">L</text>
        <text x="865" y="289">CATALYPANT(MOI)-VCA-L</text><text x="865" y="298">TTRUOCTRA</text><text x="865" y="307">TTRUOC TRAI X1</text><text x="865" y="317">L</text>
        <text x="860" y="427">CATALYPANT(MOI)-VCA-L</text><text x="860" y="436">TTRUOCTRA</text><text x="860" y="445">TTRUOC TRAI X1</text><text x="860" y="455">L</text>
        <text x="865" y="562">CATALYPANT(MOI)-VCA-L</text><text x="865" y="571">TTRUOCPHA</text><text x="865" y="580">TTRUOC PHAI X1</text><text x="865" y="590">L</text>
        <text x="785" y="712">CATALYPANT(MOI)-VCA-L</text><text x="785" y="721">TSAUTRAI</text><text x="785" y="731">TSAU TRAI X1</text><text x="785" y="741">L</text>
      </g>
      <g class="lbl small">
        <text x="1107" y="719">CATALYPANT(MOI)-VCA-L</text><text x="1107" y="724">TUIDUITRA</text><text x="1107" y="729">TUI DUI TRAI X1</text>
        <text x="898" y="830">CATALYPANT(MOI)-VCA-L</text><text x="898" y="836">TUIDUIPH</text><text x="898" y="841">TUI DUI PHAI X1</text>
        <text x="1012" y="826">CATALYPANT(MOI)-VCA-L</text><text x="1012" y="831">TUIDUIPH</text><text x="1012" y="836">TUI DUI PHAI X1</text>
        <text x="1134" y="830">CATALYPANT(MOI)-VCA-L</text><text x="1134" y="836">TUIDUITRA</text><text x="1134" y="841">TUI DUI TRAI X1</text>
      </g>
      <g class="lbl tiny">
        <text x="247" y="416">CATALYPANT(MOI)-VCA-L</text><text x="247" y="420">PAGETCHIE</text><text x="247" y="424">PAGET CHIE X1</text>
        <text x="241" y="448">CATALYPANT(MOI)-VCA-L</text><text x="241" y="452">PAGETCHIE</text><text x="241" y="456">PAGET CHIE X1</text>
        <text x="691" y="857">CATALYPANT(MOI)-VCA-L</text><text x="691" y="861">PASSXANG</text><text x="691" y="865">PASS XANG X1</text>
        <text x="518" y="883">CATALYPANT(MOI)-VCA-L</text><text x="518" y="887">LUNGNGOAI</text><text x="518" y="891">LUNG NGOAI X1</text>
        <text transform="translate(12 475) rotate(-90)">CATALYPANT(MOI)-VCA-L</text><text transform="translate(17 475) rotate(-90)">LUNGNGOAI</text><text transform="translate(22 475) rotate(-90)">LUNG NGOAI X1</text>
        <text transform="translate(46 511) rotate(-90)">CATALYPANT(MOI)-VCA-L</text><text transform="translate(51 511) rotate(-90)">NOILUNGNG</text><text transform="translate(56 511) rotate(-90)">NOI LUNG NG X1</text>
        <text transform="translate(1154 468) rotate(-90)">CATALYPANT(MOI)-VCA-L</text><text transform="translate(1159 468) rotate(-90)">LUNGNGOAI</text>
        <text transform="translate(1172 525) rotate(-90)">CATALYPANT(MOI)-VCA-L</text><text transform="translate(1177 525) rotate(-90)">NOILUNGNG</text>
      </g>
    </svg>
  </main>

  <div class="hscroll"><span class="arr">&#8249;</span><span class="thumbbar"></span><span class="arr end">&#8250;</span></div>

  <footer class="status">
    <span>Total pieces:20</span><span>Total bundles:2</span><span>Placed pieces:20</span><span>Placed bundles:1</span><span>Efficiency:80.19%</span><span>Yield:2m 71.57cm</span><span>Width:145cm</span><span class="len">Length:2m 58.64cm</span>
    <span class="coord">X: 271</span><span class="coord2">Y: 0</span><span class="brand">optitex</span>
  </footer>
</div>
</body>
</html>
```
FILE: styles.css
```css
* { box-sizing: border-box; }
html, body { margin: 0; height: 100%; overflow: hidden; }
body { font-family: "Liberation Sans", Arial, sans-serif; background: #f0f0f0; color: #222; }
.defs { position: absolute; width: 0; height: 0; }
.app { display: flex; flex-direction: column; height: 938px; width: 1732px; }

.title { display: flex; align-items: center; height: 21px; background: #fff; flex: none; padding-left: 2px; }
.logo { width: 14px; height: 14px; flex: none; }
.title-text { margin-left: 5px; font-size: 11px; color: #7a7a7a; }
.win { margin-left: auto; display: flex; gap: 29px; margin-right: 17px; }
.win svg { width: 12px; height: 12px; }

.menu { display: flex; align-items: center; height: 23px; background: #d9d9d9; flex: none; font-family: "Lato", "Open Sans", sans-serif; font-size: 11.500px; color: #2a2a2a; gap: 14.500px; padding-left: 5px; }
.menu .g { margin-right: -7px; }
.g { flex: none; width: 2px; height: 12px; border-left: 2px dotted #333; margin: 0 2px 0 3px; }

.tb { display: flex; align-items: center; height: 25px; background: #d9d9d9; flex: none; }
.i { flex: none; width: 18px; height: 18px; margin: 0 1.760px; }
.s { flex: none; width: 6px; height: 20px; background: linear-gradient(#a8a8a8, #a8a8a8) center / 1px 100% no-repeat; }
.d { flex: none; width: 10.600px; height: 16px; position: relative; }
.d::after { content: ""; position: absolute; left: 2px; top: 6px; border: 3px solid transparent; border-top: 3px solid #333; }
.d.low::after { top: 10px; }
.selected { flex: none; display: flex; align-items: center; width: 21px; height: 21px; background: #ededed; border: 1px solid #b8b8b8; }
.selected .i { margin: 0 0 0 1px; }

.strip { flex: none; height: 142px; background: #a9a9a9; border-top: 1px solid #6e6e6e; border-bottom: 2px solid #8c8c8c; padding: 1px 0 0 2px; }
.cards { display: grid; grid-template-columns: repeat(10, 115.400px); }
.thumb { height: 100px; background: #fff; border: 1px solid #3c3c3c; display: flex; flex-direction: column; font-size: 8.500px; letter-spacing: -.2px; color: #444; }
.thumb svg { display: block; width: 100%; height: 74px; flex: none; }
.pc { fill: #5e5e9c; stroke: #10101c; stroke-width: 1; }
.nm { padding-left: 1px; height: 12px; line-height: 12px; }
.ft { display: flex; justify-content: space-between; align-items: flex-end; height: 10px; padding-right: 3px; }
.tag { background: #c6ced8; padding: 0 2px; height: 10px; line-height: 10px; min-width: 17px; }
.boxes { margin-top: 15px; }
.qty { height: 23px; background: #fff; border: 1px solid #777; padding: 1px 0 0 3px; font-size: 8.500px; line-height: 10.500px; color: #555; white-space: nowrap; letter-spacing: .35px; }

.canvas { flex: none; height: 666px; background: #f8f8fa; border-left: 3px solid #8f8f8f; overflow: hidden; }
.marker { display: block; width: 1732px; height: 666px; margin-left: -3px; }
.red polygon, .red path { fill: #fe0000; stroke: #4a0a22; stroke-width: .8; stroke-linejoin: round; }
.ln path { fill: none; stroke: #4a0a22; stroke-width: .7; }
.box rect { fill: none; stroke: #4a0a30; stroke-width: .7; }
.dash { stroke: #6a78a8; stroke-width: 1; stroke-dasharray: 10 3 2 3; }
.lbl text { font-family: "Liberation Sans", Arial, sans-serif; font-size: 10px; text-anchor: middle; fill: #6a0a2c; fill-opacity: .85; }
.lbl.small text { font-size: 6.500px; }
.lbl.tiny text { font-size: 4.500px; }

.hscroll { flex: none; display: flex; align-items: center; height: 17px; background: #f0f0f0; border-top: 1px solid #8f8f8f; border-bottom: 1px solid #dcdcdc; font-size: 17px; line-height: 1; color: #222; padding: 0 6px; }
.arr { width: 12px; font-weight: 700; }
.thumbbar { width: 15px; height: 15px; background: #cdcdcd; }
.arr.end { margin-left: auto; text-align: right; }

.status { flex: 1; display: flex; align-items: center; background: #f0f0f0; font-family: "Open Sans", sans-serif; font-size: 10px; color: #333; padding-left: 8px; gap: 6px; white-space: nowrap; }
.len { margin-left: 2px; }
.coord { margin-left: auto; }
.coord2 { margin-left: -3px; margin-right: 13px; }
.brand { width: 68px; height: 17px; line-height: 17px; background: #f9f9f9; font-family: "Liberation Serif", serif; font-size: 12.500px; color: #444; padding-left: 6px; margin-right: 4px; }
```
